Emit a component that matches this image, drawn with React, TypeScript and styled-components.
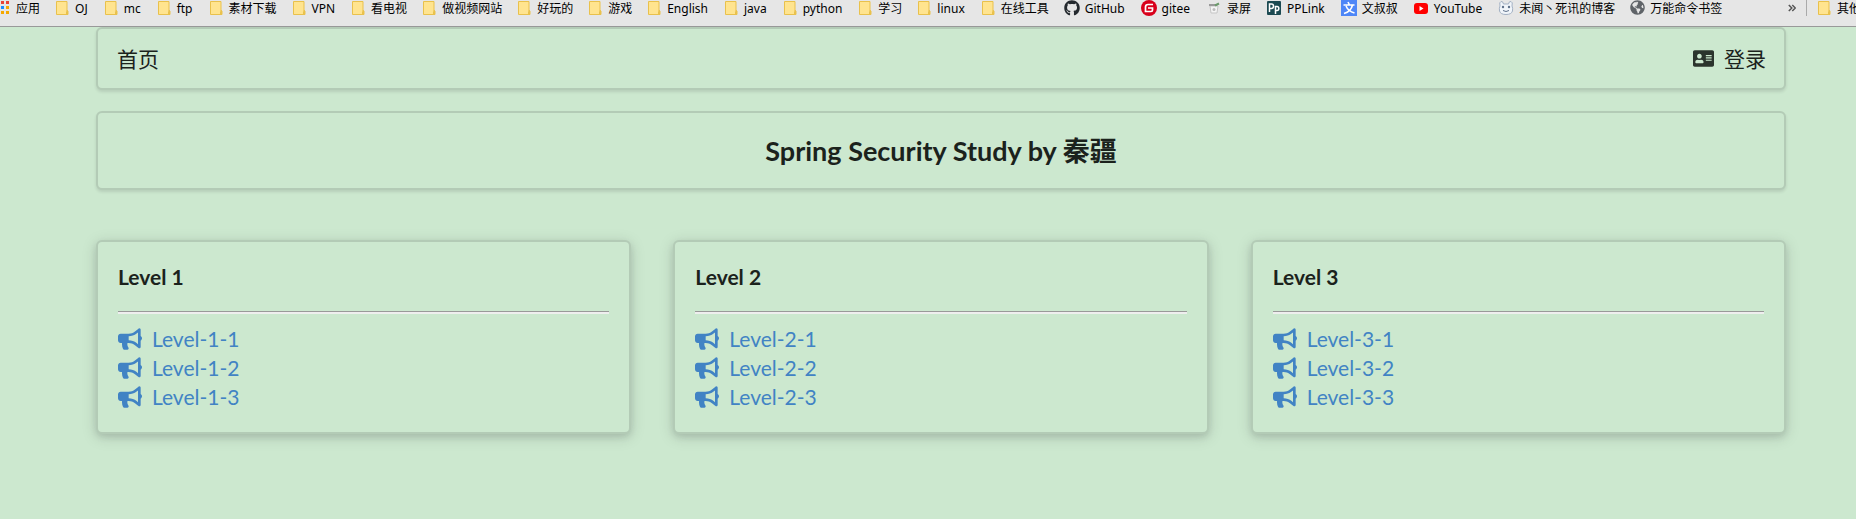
import React from "react";
import styled, { createGlobalStyle } from "styled-components";
import { FaAddressCard, FaBullhorn, FaGithub, FaGlobeAmericas } from "react-icons/fa";

const GlobalStyle = createGlobalStyle`
  *, *::before, *::after { box-sizing: border-box; }
  body {
    margin: 0;
    background: #cce8cf;
    color: #1b221c;
    font-family: Lato, "Noto Sans CJK SC", sans-serif;
    font-size: 21px;
    line-height: 29px;
  }
`;

const BookmarkBar = styled.nav`
  display: flex;
  align-items: flex-start;
  height: 27px;
  overflow: hidden;
  background: #e6e6e6;
  border-bottom: 1px solid #999;
  font-family: "Noto Sans", "Noto Sans CJK SC", sans-serif;
  font-size: 12px;
  line-height: 18px;
`;

const BookmarkList = styled.div`
  display: flex;
  flex: 1;
  gap: 15px;
`;

const Bookmark = styled.a<{ $gap?: number; $latin?: boolean }>`
  display: flex;
  flex: none;
  align-items: flex-start;
  gap: ${(p) => p.$gap ?? 5}px;
  padding-right: ${(p) => (p.$latin ? 1 : 0)}px;
  color: #000;
  text-decoration: none;
  white-space: nowrap;

  svg { flex: none; display: block; }
`;

const BarEnd = styled.div`
  display: flex;
  flex: none;
  width: 68px;
  gap: 10px;
`;

const MoreButton = styled.button`
  flex: none;
  width: 8px;
  height: 16px;
  padding: 0;
  border: 0;
  background: none;
  color: #555;

  svg { display: block; }
`;

const Divider = styled.span`
  flex: none;
  width: 1px;
  height: 16px;
  background: #aaa;
`;

const Page = styled.div`
  padding: 0 70px 60px 96px;
`;

const Segment = styled.section<{ $raised?: boolean }>`
  padding: 21px 20px;
  border: 2px solid #b3cbb6;
  border-radius: 6px;
  background: #cce8cf;
  box-shadow: ${(p) =>
    p.$raised
      ? "0 3px 6px rgba(34, 36, 38, 0.12), 0 3px 15px rgba(34, 36, 38, 0.15)"
      : "0 2px 3px rgba(34, 36, 38, 0.12)"};
`;

const TopMenu = styled(Segment).attrs({ as: "header" })`
  display: flex;
  align-items: center;
  justify-content: space-between;
  padding: 15px 18px 15px 19px;
`;

const MenuLink = styled.a`
  display: flex;
  align-items: center;
  gap: 10px;
  color: inherit;
  text-decoration: none;

  svg { color: #2b342d; }
`;

const TitleSegment = styled(Segment)`
  margin: 21px 0 50px;
  text-align: center;
`;

const Title = styled.h1`
  margin: 0;
  font-size: 27px;
  line-height: 33px;
  font-weight: 700;
`;

const Levels = styled.main`
  display: grid;
  grid-template-columns: repeat(3, 1fr);
  gap: 42px;
`;

const LevelTitle = styled.h2`
  margin: 0;
  font-size: 21px;
  line-height: 28px;
  font-weight: 700;
`;

const Rule = styled.hr`
  margin: 20px 0 10px;
  border: 0;
  border-top: 1px solid #999;
  border-bottom: 2px solid #eee;
`;

const LevelList = styled.ul`
  margin: 0;
  padding: 0;
  list-style: none;
`;

const LevelLink = styled.a`
  display: flex;
  align-items: center;
  gap: 10px;
  color: #4183c4;
  line-height: 29px;
  text-decoration: none;
`;

const Folder = () => (
  <svg width="15" height="16" viewBox="-1 0 15 16">
    <path d="M.5 1.500h10.500v9.500h1v3.500h-11.500z" fill="#ffe48f" stroke="#e9c14c" />
    <path d="M10.500 14v-2.500q.5-1.500 1-1v3.500z" fill="#ffe48f" stroke="#e9c14c" />
  </svg>
);

const Apps = () => (
  <svg width="10" height="16" viewBox="0 0 10 16">
    {[
      ["#ea4335", "#ea4335"],
      ["#1a8cff", "#f5a800"],
      ["#f5a800", "#f5a800"],
    ].map(([left, right], i) => (
      <g key={i}>
        <rect x="1" y={1 + i * 5} width="3" height="3" fill={left} />
        <rect x="6" y={1 + i * 5} width="3" height="3" fill={right} />
      </g>
    ))}
  </svg>
);

const Chevrons = () => (
  <svg width="8" height="16" viewBox="0 0 8 16">
    <path d="M.8 5l3 3-3 3M4.300 5l3 3-3 3" fill="none" stroke="#555" strokeWidth="1.500" />
  </svg>
);

const Gitee = () => (
  <svg width="16" height="16" viewBox="0 0 16 16">
    <circle cx="8" cy="8" r="8" fill="#d8001b" />
    <path d="M12 4.500H7Q4.500 4.500 4.500 7v4.500H10q1.500 0 1.500-1.500V8H7" fill="none" stroke="#fff" strokeWidth="1.700" />
  </svg>
);

const Recorder = () => (
  <svg width="16" height="16" viewBox="0 0 16 16">
    <path d="M4 6h8l-1 7H5z" fill="#f4f4f4" stroke="#c5c5c5" />
    <path d="M3 4h8v2H3z" fill="#999" />
    <path d="M9 5.500l4-2" stroke="#6b9a6b" strokeWidth="2" />
    <circle cx="8" cy="9.500" r="1.500" fill="#bbb" />
  </svg>
);

const PPLink = () => (
  <svg width="16" height="16" viewBox="0 0 16 16">
    <rect x="1" y="1" width="14" height="14" rx="1" fill="#1c4a52" />
    <path d="M3.500 12V4h2q2 0 2 2.200t-2 2.200h-2M9.500 14V6.500h1.500q1.800 0 1.800 2t-1.800 2H9.500" fill="none" stroke="#fff" strokeWidth="1.500" />
  </svg>
);

const Wen = () => (
  <svg width="16" height="16" viewBox="0 0 16 16">
    <rect width="16" height="16" fill="#4e86f7" />
    <path d="M2.500 5h11M7 2l1.500 3M3 13.500q7-2 8.500-8.500M5 6q2 5 8.500 7" fill="none" stroke="#fff" strokeWidth="1.600" />
  </svg>
);

const YouTube = () => (
  <svg width="16" height="16" viewBox="0 0 16 16">
    <rect x="1" y="3" width="14" height="11" rx="3" fill="#f00" />
    <path d="M6.500 6v5l4-2.500z" fill="#fff" />
  </svg>
);

const Face = () => (
  <svg width="16" height="16" viewBox="0 0 16 16">
    <path d="M2 6Q1 2 3 1.500T5.500 4h5Q11 1 13 1.500T14 6q1 2 .5 5-1 3.500-6.500 3.500T1.500 11q-.5-3 .5-5z" fill="#f1f5fa" stroke="#a3b1c4" />
    <circle cx="5" cy="7" r="1.200" fill="#60728c" />
    <circle cx="11" cy="7" r="1.200" fill="#60728c" />
    <path d="M5 10.500q3 2 6 0" fill="none" stroke="#60728c" />
  </svg>
);

interface Mark { label: string; icon?: React.ReactNode }

const marks: Mark[] = [
  { label: "OJ" }, { label: "mc" }, { label: "ftp" }, { label: "素材下载" },
  { label: "VPN" }, { label: "看电视" }, { label: "做视频网站" }, { label: "好玩的" },
  { label: "游戏" }, { label: "English" }, { label: "java" }, { label: "python" },
  { label: "学习" }, { label: "linux" }, { label: "在线工具" },
  { label: "GitHub", icon: <FaGithub size={16} color="#24292e" /> },
  { label: "gitee", icon: <Gitee /> },
  { label: "录屏", icon: <Recorder /> },
  { label: "PPLink", icon: <PPLink /> },
  { label: "文叔叔", icon: <Wen /> },
  { label: "YouTube", icon: <YouTube /> },
  { label: "未闻丶死讯的博客", icon: <Face /> },
  { label: "万能命令书签", icon: <FaGlobeAmericas size={15} color="#5f6368" /> },
];

const isLatin = (label: string) => /^[a-z]+$/i.test(label);

export default function App() {
  return (
    <>
      <GlobalStyle />
      <BookmarkBar>
        <BookmarkList>
          <Bookmark href="#" $gap={6}><Apps />应用</Bookmark>
          {marks.map((m) => (
            <Bookmark href="#" key={m.label} $latin={isLatin(m.label)}>
              {m.icon ?? <Folder />}{m.label}
            </Bookmark>
          ))}
        </BookmarkList>
        <BarEnd>
          <MoreButton aria-label="更多书签"><Chevrons /></MoreButton>
          <Divider />
          <Bookmark href="#"><Folder />其他书签</Bookmark>
        </BarEnd>
      </BookmarkBar>
      <Page>
        <TopMenu>
          <MenuLink href="#">首页</MenuLink>
          <MenuLink href="#"><FaAddressCard size={21} />登录</MenuLink>
        </TopMenu>
        <TitleSegment>
          <Title>Spring Security Study by 秦疆</Title>
        </TitleSegment>
        <Levels>
          {[1, 2, 3].map((level) => (
            <Segment $raised key={level}>
              <LevelTitle>Level {level}</LevelTitle>
              <Rule />
              <LevelList>
                {[1, 2, 3].map((n) => (
                  <li key={n}>
                    <LevelLink href="#"><FaBullhorn size={24} />{`Level-${level}-${n}`}</LevelLink>
                  </li>
                ))}
              </LevelList>
            </Segment>
          ))}
        </Levels>
      </Page>
    </>
  );
}
